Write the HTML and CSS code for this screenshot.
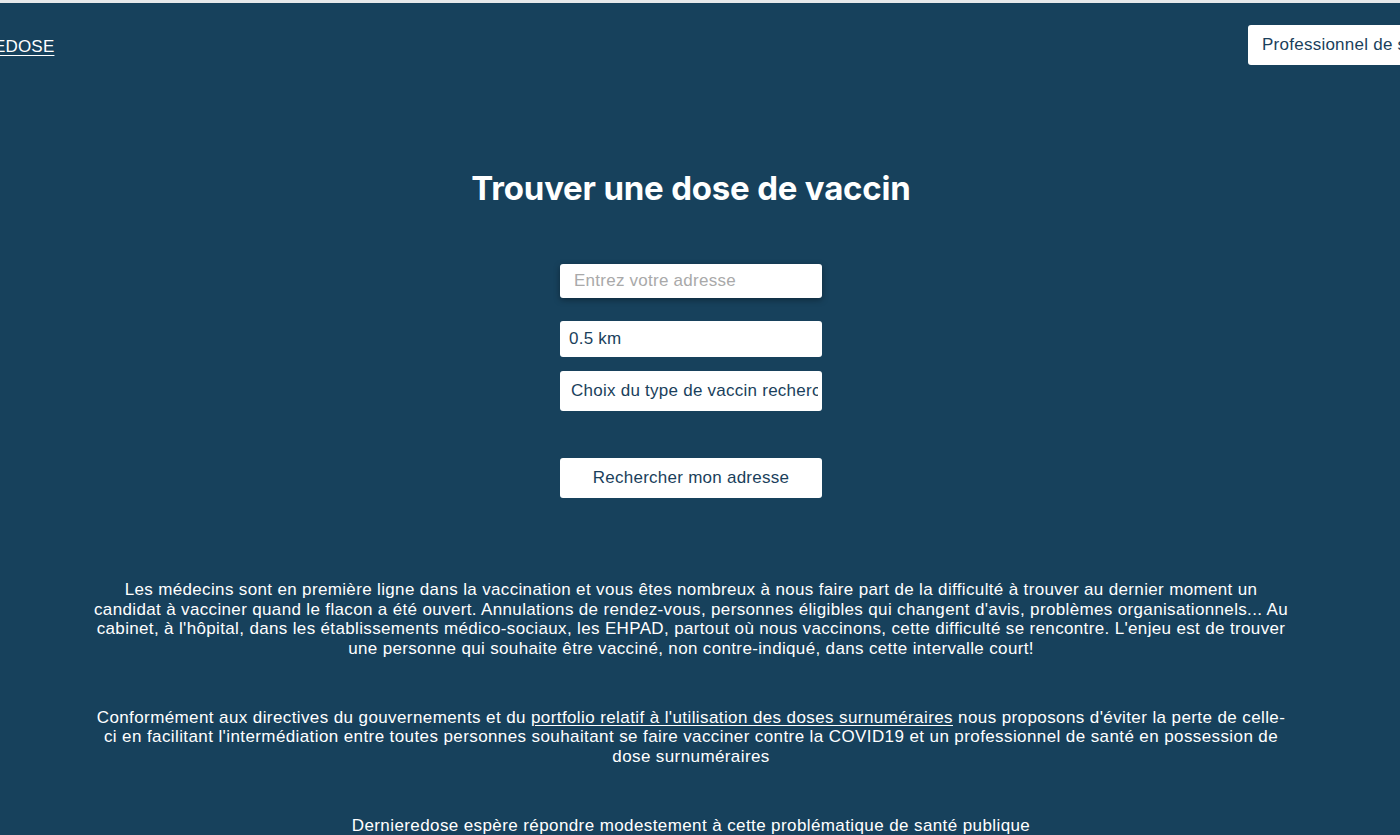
FILE: index.html
```html
<!DOCTYPE html>
<html lang="fr">
<head>
<meta charset="utf-8">
<title>Dernieredose</title>
<link rel="stylesheet" href="styles.css">
</head>
<body>
<div class="topline"></div>
<header class="header">
  <a class="brand" href="#">DERNIEREDOSE</a>
  <a class="pro-btn" href="#">Professionnel de santé</a>
</header>
<main class="main">
  <h1 class="title">Trouver une dose de vaccin</h1>
  <form class="search">
    <input class="field field-address" type="text" placeholder="Entrez votre adresse">
    <div class="field field-distance">0.5 km</div>
    <div class="field field-type"><span class="field-clip">Choix du type de vaccin recherché</span></div>
    <button class="submit" type="button">Rechercher mon adresse</button>
  </form>
  <section class="text">
    <p class="para para-intro">Les médecins sont en première ligne dans la vaccination et vous êtes nombreux à nous faire part de la difficulté à trouver au dernier moment un candidat à vacciner quand le flacon a été ouvert. Annulations de rendez-vous, personnes éligibles qui changent d'avis, problèmes organisationnels... Au cabinet, à l'hôpital, dans les établissements médico-sociaux, les EHPAD, partout où nous vaccinons, cette difficulté se rencontre. L'enjeu est de trouver une personne qui souhaite être vacciné, non contre-indiqué, dans cette intervalle court!</p>
    <p class="para para-gov">Conformément aux directives du gouvernements et du <a href="#">portfolio relatif à l'utilisation des doses surnuméraires</a> nous proposons d'éviter la perte de celle-ci en facilitant l'intermédiation entre toutes personnes souhaitant se faire vacciner contre la COVID19 et un professionnel de santé en possession de dose surnuméraires</p>
    <p class="para">Dernieredose espère répondre modestement à cette problématique de santé publique</p>
  </section>
</main>
</body>
</html>
```
FILE: styles.css
```css
html, body {
  margin: 0;
  padding: 0;
  background: #17415c;
  overflow: hidden;
  font-family: "Liberation Sans", Arial, sans-serif;
  color: #ffffff;
}
.topline {
  height: 3px;
  background: #e6e8ea;
}
.header {
  display: flex;
  justify-content: space-between;
  align-items: center;
  margin-left: -84px;
  margin-right: -120px;
  padding-top: 22px;
  height: 40px;
}
.brand {
  color: #ffffff;
  font-size: 17px;
  letter-spacing: 0.2px;
  text-decoration: underline;
  text-underline-offset: 3px;
  position: relative;
  top: 2px;
}
.pro-btn {
  background: #ffffff;
  color: #1a3f5c;
  font-size: 17px;
  letter-spacing: 0.25px;
  text-decoration: none;
  border-radius: 3px;
  padding: 10px 14px;
  line-height: 20px;
  width: 244px;
  white-space: nowrap;
}
.main {
  padding-right: 18px;
  display: flex;
  flex-direction: column;
  align-items: center;
}
.title {
  margin: 103px 0 0;
  font-family: Inter, "Liberation Sans", sans-serif;
  font-weight: 700;
  font-size: 33px;
  line-height: 40px;
  letter-spacing: -0.2px;
}
.search {
  margin-top: 56px;
  display: flex;
  flex-direction: column;
  width: 262px;
}
.field {
  box-sizing: border-box;
  width: 262px;
  background: #ffffff;
  border: none;
  border-radius: 3px;
  font-family: "Liberation Sans", Arial, sans-serif;
  font-size: 17px;
  letter-spacing: 0.25px;
  color: #1a3f5c;
  white-space: nowrap;
  overflow: hidden;
  display: flex;
  align-items: center;
  outline: none;
}
.field-address {
  height: 34px;
  padding: 0 14px;
  box-shadow: 0 2px 6px rgba(0, 0, 0, 0.35);
}
.field-address::placeholder {
  color: #a9a9a9;
}
.field-distance {
  margin-top: 23px;
  height: 36px;
  padding: 0 9px;
}
.field-type {
  margin-top: 14px;
  height: 40px;
  padding: 0 4px 0 11px;
}
.field-clip {
  display: block;
  flex: 1;
  min-width: 0;
  overflow: hidden;
  white-space: nowrap;
}
.submit {
  margin-top: 47px;
  height: 40px;
  background: #ffffff;
  border: none;
  border-radius: 3px;
  font-family: "Liberation Sans", Arial, sans-serif;
  font-size: 17px;
  letter-spacing: 0.25px;
  color: #1a3f5c;
}
.text {
  margin-top: 82px;
  width: 1200px;
  display: flex;
  flex-direction: column;
  align-items: center;
  text-align: center;
  font-size: 17px;
  letter-spacing: 0.4px;
  line-height: 19.5px;
}
.para {
  margin: 0 0 49.5px;
  width: 1196px;
}
.para-intro {
  width: 1200px;
  letter-spacing: 0.35px;
}
.para-gov {
  width: 1196px;
}
.text a {
  color: #ffffff;
  text-decoration: underline;
  text-underline-offset: 2px;
}
```
